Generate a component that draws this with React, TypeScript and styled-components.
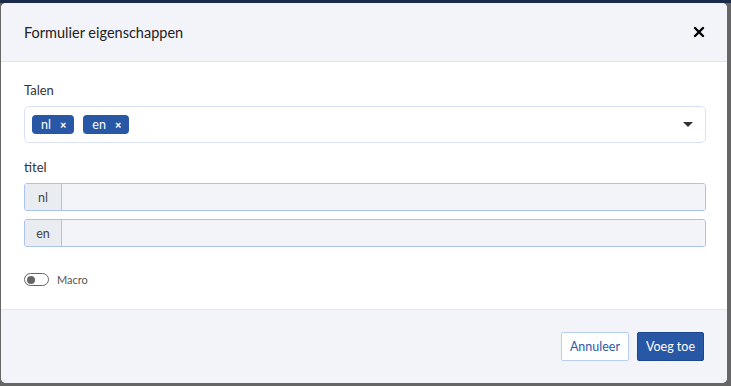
import styled, { createGlobalStyle } from "styled-components";

const GlobalStyle = createGlobalStyle`
  html, body {
    margin: 0;
    padding: 0;
  }
  body {
    font-family: Lato, "Open Sans", sans-serif;
    color: #222;
  }
`;

const Backdrop = styled.div`
  box-sizing: border-box;
  width: 731px;
  height: 386px;
  padding: 3px 4px 3px 1px;
  background: linear-gradient(#1d2b4b 0 3px, #666 3px);
  display: flex;
`;

const Modal = styled.div`
  flex: 1;
  display: flex;
  flex-direction: column;
  background: #fff;
  border-radius: 5px;
  overflow: hidden;
`;

const Header = styled.div`
  height: 58px;
  display: flex;
  align-items: center;
  justify-content: space-between;
  padding: 0 22px 0 23px;
  background: #f3f4f9;
  border-bottom: 1px solid #e1e3ea;
`;

const Title = styled.h1`
  margin: 0;
  font-size: 14.5px;
  font-weight: 400;
  color: #222;
`;

const Close = styled.button`
  border: none;
  background: none;
  padding: 0;
  width: 12px;
  height: 12px;
  display: flex;
  cursor: pointer;
`;

const Body = styled.div`
  flex: 1;
  padding: 19px 21px 0 23px;
  display: flex;
  flex-direction: column;
`;

const Label = styled.div<{ $top?: number }>`
  font-size: 13px;
  line-height: 18px;
  color: #333;
  margin-top: ${(p) => p.$top ?? 0}px;
  margin-bottom: 7px;
`;

const Select = styled.div`
  box-sizing: border-box;
  height: 37px;
  border: 1px solid #d9e1f6;
  border-radius: 5px;
  display: flex;
  align-items: center;
  padding: 0 12px 0 7px;
  gap: 9px;
`;

const Chip = styled.span`
  display: inline-flex;
  align-items: center;
  height: 19px;
  padding: 0 8px 0 9px;
  gap: 9px;
  background: #2857a6;
  color: #fff;
  border-radius: 4px;
  font-size: 12.5px;
`;

const ChipX = styled.span`
  font-size: 11px;
  font-weight: 900;
`;

const Caret = styled.span`
  margin-left: auto;
  width: 0;
  height: 0;
  border-left: 5px solid transparent;
  border-right: 5px solid transparent;
  border-top: 5px solid #333;
`;

const InputGroup = styled.div`
  box-sizing: border-box;
  height: 28px;
  display: flex;
  border: 1px solid #aac3ea;
  border-radius: 3px;
  overflow: hidden;
  & + & {
    margin-top: 8px;
  }
`;

const Addon = styled.span`
  width: 36px;
  display: flex;
  align-items: center;
  justify-content: center;
  background: #e9ecf1;
  border-right: 1px solid #aac3ea;
  font-size: 12.5px;
  color: #444;
`;

const Field = styled.input`
  flex: 1;
  border: none;
  background: #f3f4f9;
  outline: none;
`;

const ToggleRow = styled.label`
  display: flex;
  align-items: center;
  gap: 8px;
  margin-top: 26px;
  font-size: 11px;
  color: #555;
`;

const Switch = styled.span`
  box-sizing: border-box;
  width: 25px;
  height: 13px;
  border: 1.5px solid #666;
  border-radius: 7px;
  display: flex;
  align-items: center;
  padding-left: 1.5px;
  &::before {
    content: "";
    width: 8px;
    height: 8px;
    border-radius: 50%;
    background: #666;
  }
`;

const Footer = styled.div`
  height: 74px;
  box-sizing: border-box;
  display: flex;
  align-items: center;
  justify-content: flex-end;
  gap: 8px;
  padding: 0 23px 1px;
  background: #f3f4f9;
  border-top: 1px solid #e6e8ee;
`;

const Button = styled.button<{ $primary?: boolean }>`
  height: 29px;
  padding: 0 8px;
  border-radius: 2px;
  font-family: inherit;
  font-size: 12.5px;
  cursor: pointer;
  border: 1px solid ${(p) => (p.$primary ? "#1d4690" : "#b9cdef")};
  background: ${(p) => (p.$primary ? "#2857a6" : "#fff")};
  color: ${(p) => (p.$primary ? "#fff" : "#2d5aa6")};
`;

const langs = ["nl", "en"];

export default function App() {
  return (
    <>
      <GlobalStyle />
      <Backdrop>
        <Modal>
          <Header>
            <Title>Formulier eigenschappen</Title>
            <Close aria-label="Sluiten">
              <svg width="12" height="12" viewBox="0 0 12 12">
                <path d="M2 2 L10 10 M10 2 L2 10" stroke="#000" strokeWidth="2.4" strokeLinecap="round" />
              </svg>
            </Close>
          </Header>
          <Body>
            <Label>Talen</Label>
            <Select>
              {langs.map((l) => (
                <Chip key={l}>
                  {l}
                  <ChipX>×</ChipX>
                </Chip>
              ))}
              <Caret />
            </Select>
            <Label $top={15}>titel</Label>
            {langs.map((l) => (
              <InputGroup key={l}>
                <Addon>{l}</Addon>
                <Field />
              </InputGroup>
            ))}
            <ToggleRow>
              <Switch />
              Macro
            </ToggleRow>
          </Body>
          <Footer>
            <Button>Annuleer</Button>
            <Button $primary>Voeg toe</Button>
          </Footer>
        </Modal>
      </Backdrop>
    </>
  );
}
